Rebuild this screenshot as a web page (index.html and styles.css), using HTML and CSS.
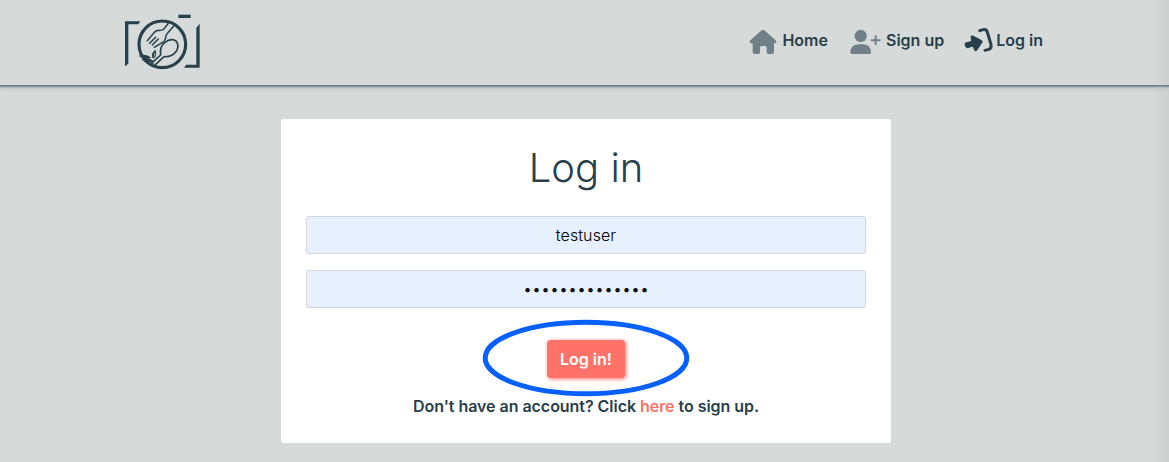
FILE: index.html
```html
<!DOCTYPE html>
<html lang="en">
<head>
<meta charset="utf-8">
<title>Log in</title>
<link rel="stylesheet" href="styles.css">
</head>
<body>
<header class="navbar">
  <a class="brand" aria-label="Home page">
    <svg class="logo" viewBox="0 0 300 225" fill="none" stroke="#28404b">
      <path d="M30 49H76L70 58H40V176L30 184Z" fill="#28404b" stroke="none"/>
      <path d="M190 29H227V39H190Z" fill="#28404b" stroke="none"/>
      <path d="M254 56V188H207L214 179H244V68Z" fill="#28404b" stroke="none"/>
      <circle cx="142" cy="118" r="70" stroke-width="9.5"/>
      <path d="M159 56L145 74Q138 77 130 76Q122 77 117 83L97 107M177 62L158 84Q152 90 152 98Q151 106 145 111L118 127M122 97L104 115M130 102L112 120" stroke-width="4.5" stroke-linecap="round"/>
      <path d="M108 176L137 150Q133 127 149 113Q166 99 182 107Q194 119 185 137Q171 157 147 155L119 181" stroke-width="5" stroke-linejoin="round"/>
      <path d="M70 153Q91 143 109 158Q91 163 70 153ZM80 165Q99 155 116 168Q98 176 80 165ZM111 158Q108 143 121 134Q128 149 118 160Z" fill="#28404b" stroke="none"/>
      <path d="M117 157L120 143" stroke="#d5dad8" stroke-width="2"/>
      <path d="M86 158Q104 160 115 177" stroke-width="4"/>
    </svg>
  </a>
  <nav class="links">
    <a class="link home">
      <svg class="icon" viewBox="0 0 84 78" fill="#6f8087"><path d="M38 4Q42 1 46 4L80 34Q86 42 76 43H75V69Q75 75 69 75H58Q53 75 53 70V56Q53 51 48 51H38Q33 51 33 56V70Q33 75 28 75H17Q11 75 11 69V43H8Q-2 42 4 34Z"/></svg>
      <span>Home</span>
    </a>
    <a class="link signup">
      <svg class="icon" viewBox="0 0 93 78" fill="#6f8087"><circle cx="32" cy="21" r="18.5"/><path d="M1 70Q2 46 27 46H38Q62 46 63 70Q63 75 58 75H6Q1 75 1 70Z"/><path d="M77 22V46M65 34H89" stroke="#6f8087" stroke-width="6" stroke-linecap="round"/></svg>
      <span>Sign up</span>
    </a>
    <a class="link login">
      <svg class="icon" viewBox="0 0 87 75" fill="#28404b"><path d="M3 49Q2 46 5 45L24 40L21 29Q20 22 27 24L53 38Q56 40 54 43L38 67Q33 71 31 65L28 54L10 59Q7 60 6 57Z" stroke="#28404b" stroke-width="3" stroke-linejoin="round"/><path d="M47 8L57 5Q67 3 70 12L81 50Q83 61 74 64L63 67" fill="none" stroke="#28404b" stroke-width="9" stroke-linecap="round"/></svg>
      <span>Log in</span>
    </a>
  </nav>
</header>
<main class="page">
  <form class="card">
    <h1 class="title">Log in</h1>
    <input class="field" type="text" value="testuser" aria-label="Username">
    <input class="field password" type="text" value="••••••••••••••" aria-label="Password">
    <div class="action">
      <button class="submit" type="button">Log in!</button>
      <svg class="highlight" viewBox="0 0 208 78" fill="none"><ellipse cx="104" cy="39" rx="100.8" ry="35.7" stroke="#0560fd" stroke-width="5"/></svg>
    </div>
    <p class="hint">Don't have an account? Click <a class="here">here</a> to sign up.</p>
  </form>
</main>
</body>
</html>
```
FILE: styles.css
```css
* { box-sizing: border-box; }
body {
  margin: 0;
  height: 462px;
  overflow: hidden;
  background: linear-gradient(to left, #ccd1d0, #d6dad8 18px);
  color: #28404b;
  font: 600 16px/24px Inter, sans-serif;
}
.navbar {
  display: flex;
  justify-content: space-between;
  height: 85px;
  padding: 5px 126px 0 115px;
  box-shadow: 0 1px 0 #6d7f88, 0 2px 0 #8b999f, 0 3px 0 #b0b9bb, 0 4px 3px #bcc4c5;
  background: linear-gradient(to left, #ccd1d0, #d6dad8 18px);
}
.logo { display: block; width: 100px; height: 75px; }
.links { display: flex; padding-top: 23px; }
.link { display: flex; height: 26px; }
.link .icon { display: block; height: 26px; margin-top: 1px; }
.home .icon { width: 28px; margin-right: 5px; }
.signup { margin-left: 22px; }
.signup .icon { width: 31px; margin-right: 5px; }
.login { margin-left: 20px; }
.login .icon { width: 29px; height: 25px; margin: 0 3px 0 0; overflow: visible; }
.page { display: flex; justify-content: center; padding: 34px 0 0 3px; }
.card {
  display: flex;
  flex-direction: column;
  width: 610px;
  height: 324px;
  padding: 25px 25px 0;
  border-radius: 3px;
  background: #fff;
}
.title {
  margin: 0 0 24px;
  font-size: 40px;
  font-weight: 300;
  line-height: 48px;
  text-align: center;
}
.field {
  width: 100%;
  height: 38px;
  margin: 0 0 16px;
  padding: 0 12px;
  border: 1px solid #d2d6da;
  border-radius: 3px;
  background: #e7f0fe;
  color: #000;
  font: 300 16px/24px Inter, sans-serif;
  letter-spacing: 0.1px;
  text-align: center;
}
.password { letter-spacing: 0; }
.action { position: relative; align-self: center; margin-top: 16px; }
.submit {
  display: block;
  width: 78px;
  height: 38px;
  padding: 0;
  border: 0;
  border-radius: 4px;
  background: #ff7269;
  box-shadow: 1px 1px 4px #ff7269;
  color: #fff;
  font: 600 16px/24px Inter, sans-serif;
}
.highlight {
  position: absolute;
  left: -65px;
  top: -21.5px;
  width: 208px;
  height: 78px;
}
.hint { margin: 16px 0 0; letter-spacing: -0.04px; text-align: center; }
.here { color: #ff7269; }
```
